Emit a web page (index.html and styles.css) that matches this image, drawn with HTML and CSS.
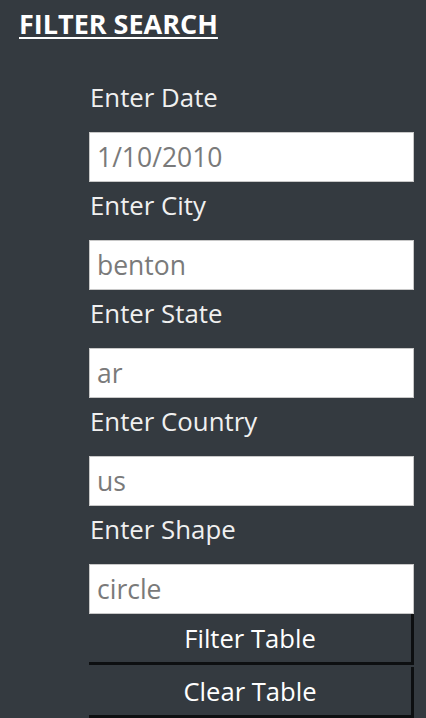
FILE: index.html
```html
<!DOCTYPE html>
<html lang="en">
<head>
<meta charset="utf-8">
<title>Filter Search</title>
<link rel="stylesheet" href="styles.css">
</head>
<body>
<div class="panel">
  <h2 class="title">FILTER SEARCH</h2>
  <form class="filters">
    <label class="field-label" for="date">Enter Date</label>
    <input class="field-input" id="date" type="text" placeholder="1/10/2010">
    <label class="field-label" for="city">Enter City</label>
    <input class="field-input" id="city" type="text" placeholder="benton">
    <label class="field-label" for="state">Enter State</label>
    <input class="field-input" id="state" type="text" placeholder="ar">
    <label class="field-label" for="country">Enter Country</label>
    <input class="field-input" id="country" type="text" placeholder="us">
    <label class="field-label" for="shape">Enter Shape</label>
    <input class="field-input" id="shape" type="text" placeholder="circle">
    <button class="btn" type="button">Filter Table</button>
    <button class="btn" type="button">Clear Table</button>
  </form>
</div>
</body>
</html>
```

FILE: styles.css
```css
html, body {
  margin: 0;
  padding: 0;
  background: #343a40;
}

body {
  font-family: "Open Sans", "Noto Sans", sans-serif;
  color: #f2f2f2;
  height: 718px;
  overflow: hidden;
}

.panel {
  padding: 8px 0 0 19px;
}

.title {
  margin: 0;
  font-size: 27px;
  line-height: 32px;
  font-weight: 700;
  color: #ffffff;
  text-decoration: underline;
  text-underline-offset: 3px;
  text-decoration-thickness: 2px;
}

.filters {
  display: flex;
  flex-direction: column;
  align-items: flex-start;
  margin: 34px 0 0 70px;
  width: 325px;
}

.field-label {
  font-size: 25.8px;
  line-height: 32px;
  margin: 7px 0 19px 1px;
  color: #f0f0f0;
}

.field-input {
  box-sizing: border-box;
  width: 325px;
  height: 50px;
  margin: 0;
  padding: 0 7px;
  border: 1px solid #c8c8c8;
  background: #ffffff;
  font-family: inherit;
  font-size: 26.5px;
  color: #333;
  outline: none;
}

.field-input::placeholder {
  color: #7a7a7a;
}

.btn {
  box-sizing: border-box;
  width: 325px;
  height: 51px;
  margin: 0 0 2px 0;
  padding: 0;
  border: 0;
  border-right: 3px solid #0d0f11;
  border-bottom: 3px solid #0d0f11;
  background: #343a40;
  color: #ffffff;
  font-family: inherit;
  font-size: 25.6px;
  text-align: center;
}
```
